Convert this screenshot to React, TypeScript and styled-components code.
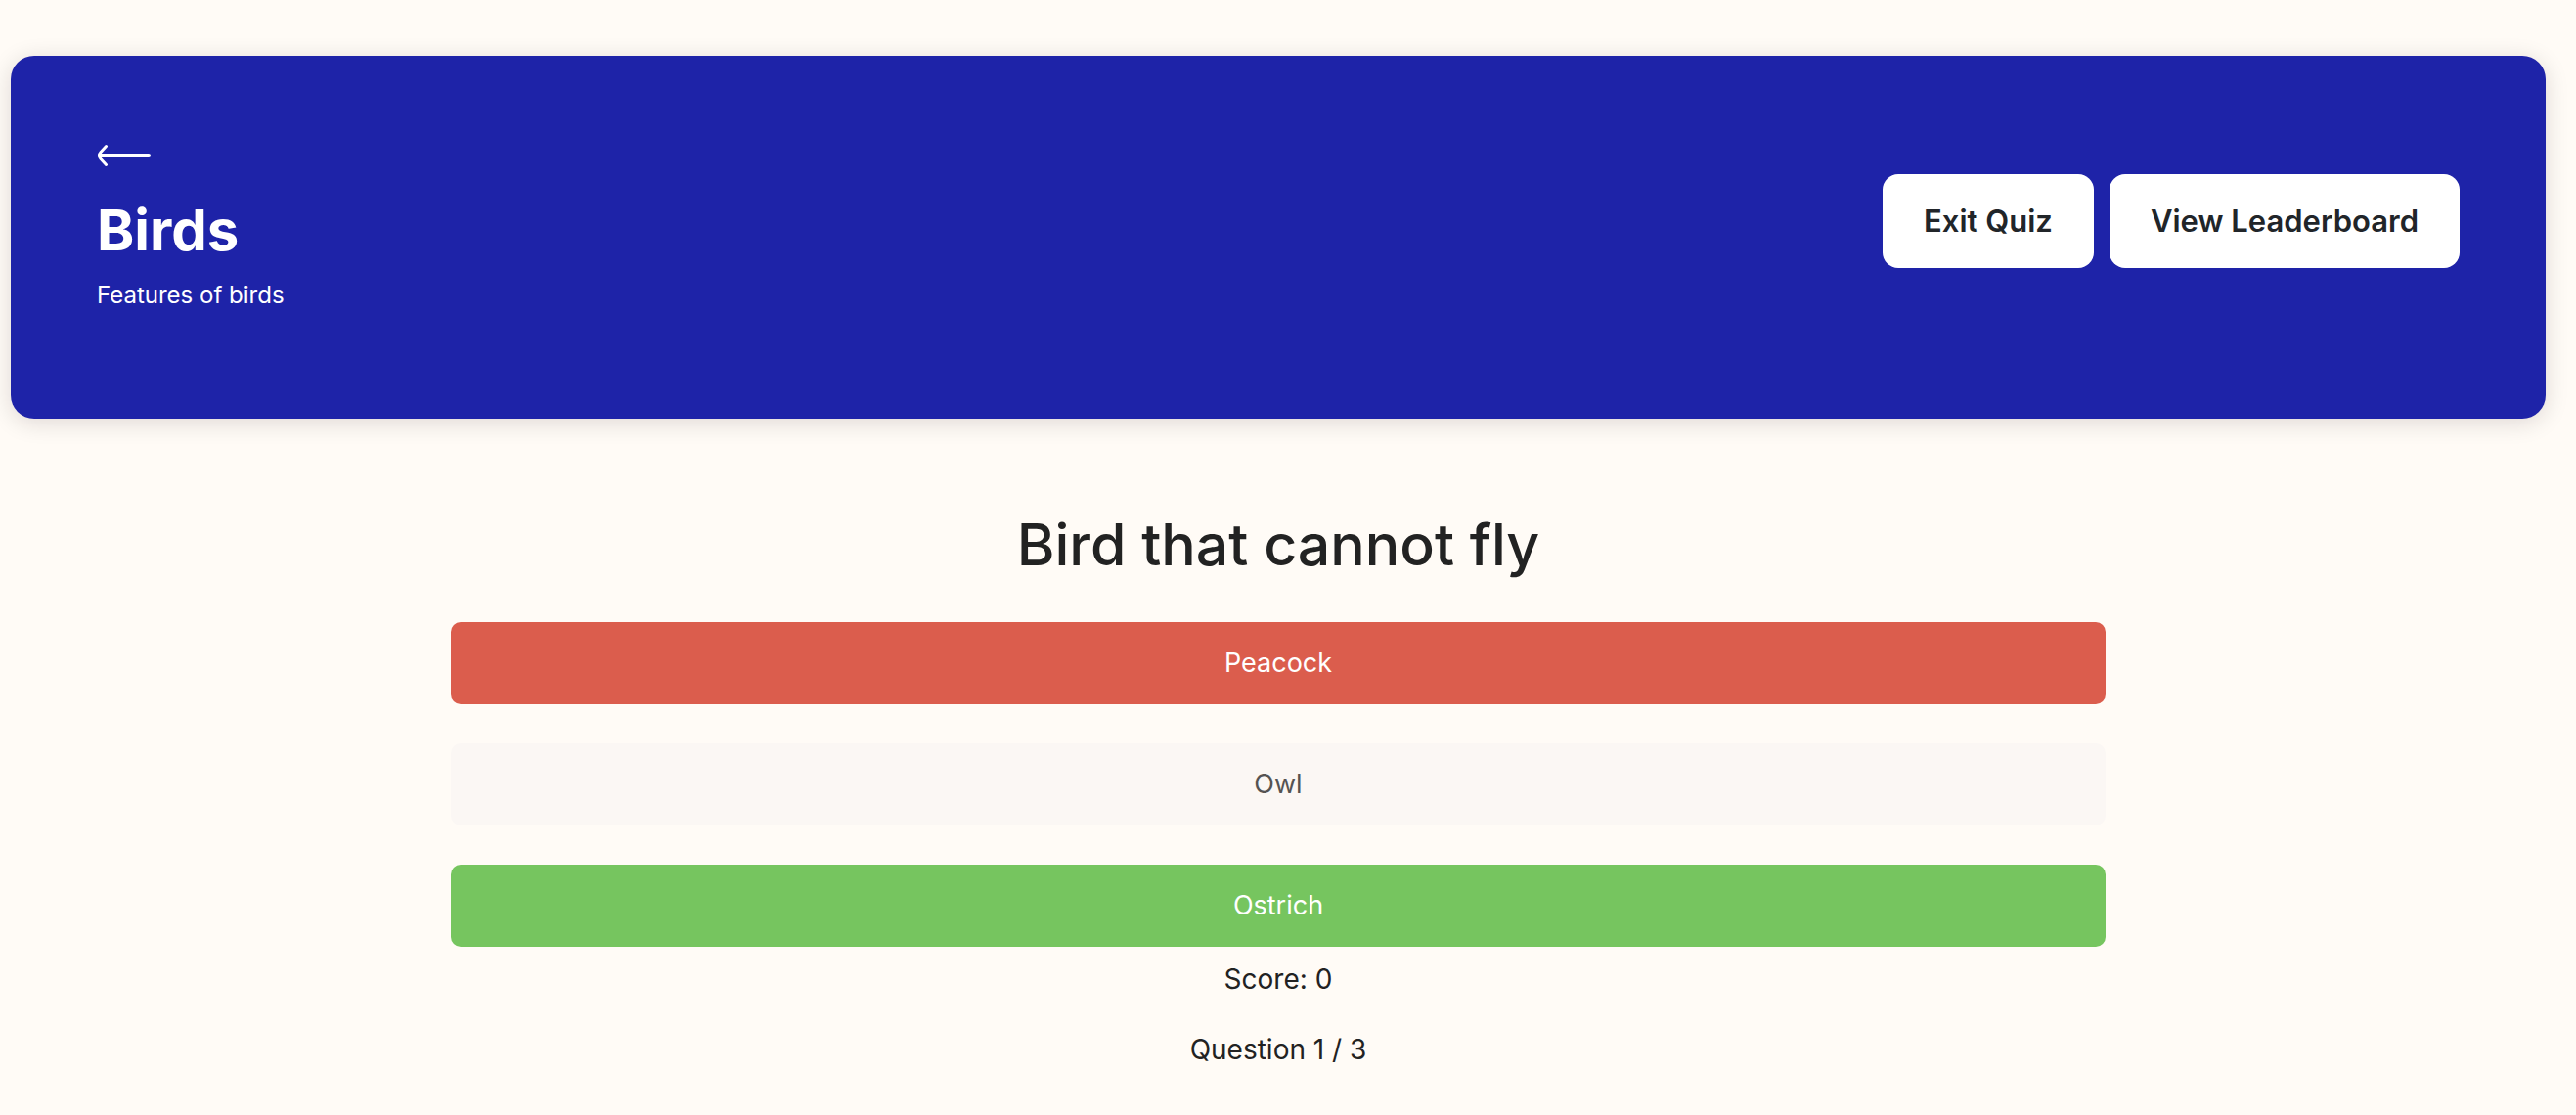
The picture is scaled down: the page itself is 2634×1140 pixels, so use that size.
import React from "react";
import styled, { createGlobalStyle } from "styled-components";

const GlobalStyle = createGlobalStyle`
  *, *::before, *::after { box-sizing: border-box; }
  body {
    margin: 0;
    background: #fffbf6;
    color: #222222;
    font-family: Inter, "Liberation Sans", sans-serif;
    -webkit-font-smoothing: antialiased;
  }
  h1, h2, p, ul { margin: 0; padding: 0; }
`;

const Page = styled.div`
  padding: 57px 31px 48px 11px;
`;

const Banner = styled.header`
  display: flex;
  justify-content: space-between;
  align-items: center;
  padding: 72px 88px 105px;
  border-radius: 24px;
  background: #1e23a8;
  color: #ffffff;
  box-shadow: 0 4px 24px rgba(30, 10, 20, 0.14);
`;

const Heading = styled.div`
  display: flex;
  flex-direction: column;
  align-items: flex-start;
  gap: 12px;
`;

const BackButton = styled.button`
  display: flex;
  align-items: center;
  height: 60px;
  padding: 0;
  border: 0;
  background: none;
  color: inherit;
  cursor: pointer;
`;

const Title = styled.h1`
  font-size: 58px;
  line-height: 68px;
  font-weight: 700;
`;

const Subtitle = styled.p`
  font-size: 24px;
  line-height: 42px;
`;

const Actions = styled.div`
  display: flex;
  gap: 16px;
`;

const ActionButton = styled.button`
  height: 96px;
  padding: 0 42px;
  border: 0;
  border-radius: 16px;
  background: #ffffff;
  color: #212529;
  font: 600 31px/40px Inter, "Liberation Sans", sans-serif;
  cursor: pointer;
`;

const Quiz = styled.main`
  display: flex;
  flex-direction: column;
  align-items: center;
  padding: 88px 17.36% 0;
  text-align: center;
`;

const Question = styled.h2`
  font-size: 59px;
  line-height: 82px;
  font-weight: 500;
`;

const Options = styled.ul`
  display: flex;
  flex-direction: column;
  gap: 40px;
  width: 100%;
  margin: 38px 0 13px;
  list-style: none;
`;

type Tone = "wrong" | "plain" | "right";

const fills: Record<Tone, string> = {
  wrong: "#db5d4d",
  plain: "#fbf7f4",
  right: "#76c55f",
};

const Option = styled.button<{ $tone: Tone }>`
  display: block;
  width: 100%;
  height: 84px;
  border: 0;
  border-radius: 10px;
  background: ${(p) => fills[p.$tone]};
  color: ${(p) => (p.$tone === "plain" ? "#555352" : "#ffffff")};
  font: 400 27px/40px Inter, "Liberation Sans", sans-serif;
`;

const Status = styled.p`
  font-size: 28px;
  line-height: 40px;

  & + & { margin-top: 32px; }
`;

const answers: { label: string; tone: Tone }[] = [
  { label: "Peacock", tone: "wrong" },
  { label: "Owl", tone: "plain" },
  { label: "Ostrich", tone: "right" },
];

export default function App() {
  return (
    <>
      <GlobalStyle />
      <Page>
        <Banner>
          <Heading>
            <BackButton type="button" aria-label="Back">
              <svg width="56" height="24" viewBox="0 0 56 24" fill="none" stroke="currentColor" strokeWidth="3" strokeLinecap="round" strokeLinejoin="round">
                <path d="M3 12H53" strokeWidth="4" />
                <path d="M9.5 2.5L4 8.5C2 10.8 2 13.2 4 15.5L9.5 21.5" />
              </svg>
            </BackButton>
            <Title>Birds</Title>
            <Subtitle>Features of birds</Subtitle>
          </Heading>
          <Actions>
            <ActionButton type="button">Exit Quiz</ActionButton>
            <ActionButton type="button">View Leaderboard</ActionButton>
          </Actions>
        </Banner>
        <Quiz>
          <Question>Bird that cannot fly</Question>
          <Options>
            {answers.map((a) => (
              <li key={a.label}>
                <Option type="button" $tone={a.tone}>{a.label}</Option>
              </li>
            ))}
          </Options>
          <Status>Score: 0</Status>
          <Status>Question 1 / 3</Status>
        </Quiz>
      </Page>
    </>
  );
}
